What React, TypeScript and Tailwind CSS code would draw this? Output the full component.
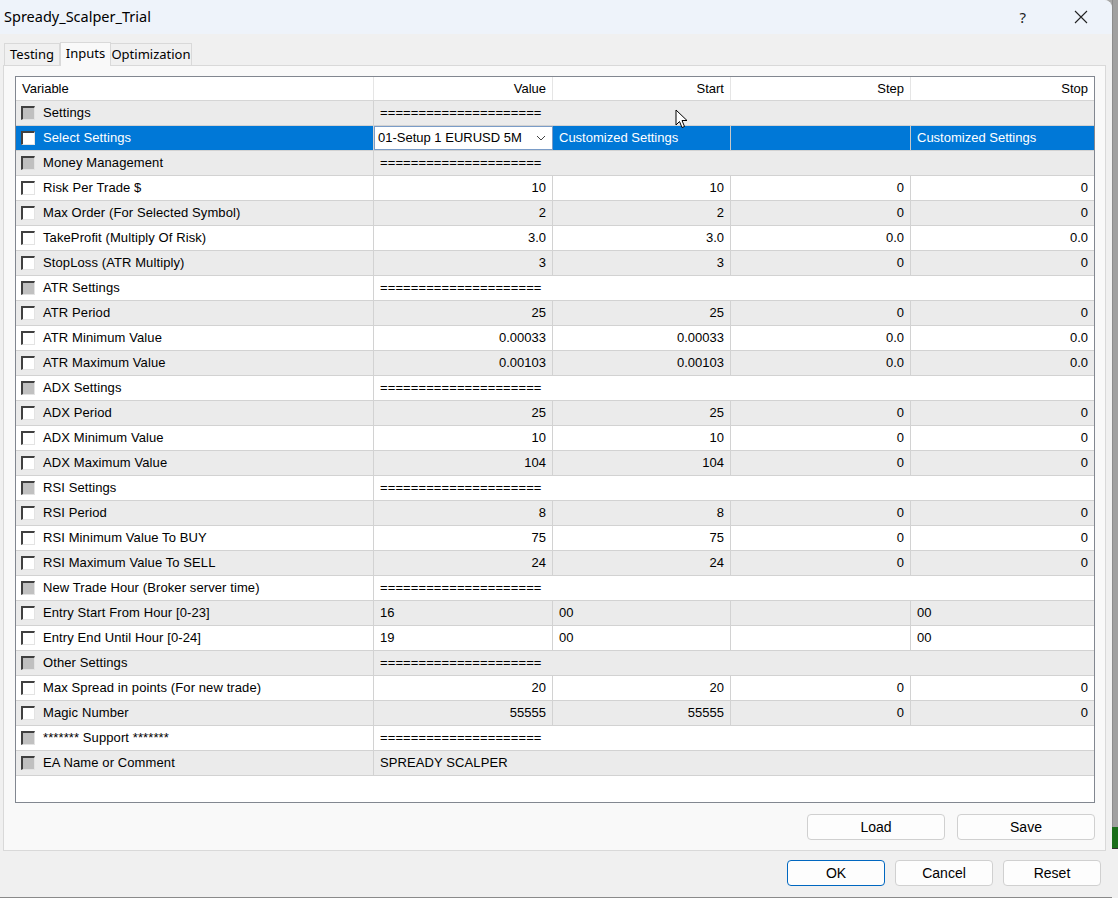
import React from "react";

type Row = {
  name: string;
  group?: boolean;
  text?: string;
  cells?: string[];
  left?: boolean;
  select?: boolean;
};

const EQ = "=====================";

const rows: Row[] = [
  { name: "Settings", group: true, text: EQ },
  { name: "Select Settings", select: true },
  { name: "Money Management", group: true, text: EQ },
  { name: "Risk Per Trade $", cells: ["10", "10", "0", "0"] },
  { name: "Max Order (For Selected Symbol)", cells: ["2", "2", "0", "0"] },
  { name: "TakeProfit (Multiply Of Risk)", cells: ["3.0", "3.0", "0.0", "0.0"] },
  { name: "StopLoss (ATR Multiply)", cells: ["3", "3", "0", "0"] },
  { name: "ATR Settings", group: true, text: EQ },
  { name: "ATR Period", cells: ["25", "25", "0", "0"] },
  { name: "ATR Minimum Value", cells: ["0.00033", "0.00033", "0.0", "0.0"] },
  { name: "ATR Maximum Value", cells: ["0.00103", "0.00103", "0.0", "0.0"] },
  { name: "ADX Settings", group: true, text: EQ },
  { name: "ADX Period", cells: ["25", "25", "0", "0"] },
  { name: "ADX Minimum Value", cells: ["10", "10", "0", "0"] },
  { name: "ADX Maximum Value", cells: ["104", "104", "0", "0"] },
  { name: "RSI Settings", group: true, text: EQ },
  { name: "RSI Period", cells: ["8", "8", "0", "0"] },
  { name: "RSI Minimum Value To BUY", cells: ["75", "75", "0", "0"] },
  { name: "RSI Maximum Value To SELL", cells: ["24", "24", "0", "0"] },
  { name: "New Trade Hour (Broker server time)", group: true, text: EQ },
  { name: "Entry Start From Hour [0-23]", cells: ["16", "00", "", "00"], left: true },
  { name: "Entry End Until Hour [0-24]", cells: ["19", "00", "", "00"], left: true },
  { name: "Other Settings", group: true, text: EQ },
  { name: "Max Spread in points (For new trade)", cells: ["20", "20", "0", "0"] },
  { name: "Magic Number", cells: ["55555", "55555", "0", "0"] },
  { name: "******* Support *******", group: true, text: EQ },
  { name: "EA Name or Comment", group: true, text: "SPREADY SCALPER" },
];

const colW = ["w-[179px]", "w-[178px]", "w-[180px]", "flex-1"];

const Check = ({ gray }: { gray?: boolean }) => (
  <div
    className={`w-[14px] h-[14px] border-t-[2px] border-l-[2px] border-t-[#404040] border-l-[#404040] border-b border-r border-b-[#e3e3e3] border-r-[#e3e3e3] ${gray ? "bg-[#c0c0c0]" : "bg-white"}`}
  />
);

const TableRow = ({ row, idx }: { row: Row; idx: number }) => {
  const sel = row.select;
  const bg = sel ? "bg-[#0078d7] text-white" : idx % 2 === 0 ? "bg-[#ebebeb]" : "bg-white";
  return (
    <div className={`flex h-[25px] border-b border-[#d2d2d2] ${bg}`}>
      <div className="w-[358px] flex items-center gap-[8px] pl-[5px] border-r border-[#d2d2d2]">
        <Check gray={row.group} />
        <span className="tracking-[0.1px]">{row.name}</span>
      </div>
      {row.group && <div className="flex-1 flex items-center pl-[6px] tracking-[0.1px]">{row.text}</div>}
      {sel && (
        <>
          <div className="w-[179px] flex items-center bg-white text-black border border-[#7a9cc7] h-[24px]">
            <span className="pl-[3px] flex-1">01-Setup 1 EURUSD 5M</span>
            <svg width="10" height="6" viewBox="0 0 10 6" className="mr-[6px]">
              <path d="M1 1 L5 5 L9 1" fill="none" stroke="#444" strokeWidth="1" />
            </svg>
          </div>
          <div className="w-[178px] flex items-center pl-[6px] border-r border-[#c8c8c8]">Customized Settings</div>
          <div className="w-[180px] border-r border-[#c8c8c8]" />
          <div className="flex-1 flex items-center pl-[6px]">Customized Settings</div>
        </>
      )}
      {row.cells &&
        row.cells.map((c, i) => (
          <div
            key={i}
            className={`${colW[i]} flex items-center ${row.left ? "justify-start pl-[6px]" : "justify-end pr-[6px]"} ${i < 3 ? "border-r border-[#d2d2d2]" : ""}`}
          >
            {c}
          </div>
        ))}
    </div>
  );
};

const Btn = ({ label, w, primary }: { label: string; w: string; primary?: boolean }) => (
  <button
    className={`${w} h-[26px] rounded-[4px] bg-[#fdfdfd] text-[14px] text-black ${primary ? "border border-[#0067c0]" : "border border-[#d0d0d0]"}`}
  >
    {label}
  </button>
);

export default function App() {
  return (
    <div className="w-[1118px] h-[898px] flex bg-[#a8a8a8] overflow-hidden" style={{ fontFamily: "'Liberation Sans', Arial, sans-serif" }}>
      <div className="w-[1112px] h-[898px] flex flex-col bg-[#f0f0f0] rounded-tr-[8px] overflow-hidden border-b border-[#8a8a8a]">
        <div className="h-[34px] bg-[#eef3fa] flex items-center pl-[4px]" style={{ fontFamily: "'Noto Sans', sans-serif" }}>
          <span className="text-[14.5px] text-black flex-1">Spready_Scalper_Trial</span>
          <span className="text-[15px] text-[#222] mr-[48px]">?</span>
          <svg width="14" height="14" viewBox="0 0 14 14" className="mr-[24px]">
            <path d="M1 1 L13 13 M13 1 L1 13" stroke="#222" strokeWidth="1.1" />
          </svg>
        </div>
        <div className="flex items-end pl-[4px] pt-[8px] h-[31px] text-[13px]" style={{ fontFamily: "'Noto Sans', sans-serif" }}>
          <div className="h-[22px] w-[56px] flex items-center justify-center border border-b-0 border-[#d9d9d9] bg-[#f0f0f0]">Testing</div>
          <div className="h-[24px] w-[51px] flex items-start pt-[1px] justify-center border border-b-0 border-[#d9d9d9] bg-[#f9f9f9] relative top-[1px] z-10">Inputs</div>
          <div className="h-[22px] w-[81px] flex items-center justify-center border border-b-0 border-l-0 border-[#d9d9d9] bg-[#f0f0f0]">Optimization</div>
        </div>
        <div className="ml-[3px] w-[1103px] h-[786px] border border-[#d9d9d9] bg-[#f9f9f9] pl-[11px] pt-[10px] flex flex-col">
          <div className="w-[1080px] h-[727px] border border-[#828790] bg-white text-[13px] text-black flex flex-col">
            <div className="flex h-[24px] border-b border-[#d5d5d5] bg-white">
              <div className="w-[358px] flex items-center pl-[6px] border-r border-[#e5e5e5]">Variable</div>
              {["Value", "Start", "Step", "Stop"].map((h, i) => (
                <div key={h} className={`${colW[i]} flex items-center justify-end pr-[6px] ${i < 3 ? "border-r border-[#e5e5e5]" : ""}`}>
                  {h}
                </div>
              ))}
            </div>
            {rows.map((r, i) => (
              <TableRow key={i} row={r} idx={i} />
            ))}
          </div>
          <div className="flex justify-end gap-[12px] pr-[10px] mt-[11px]">
            <Btn label="Load" w="w-[138px]" />
            <Btn label="Save" w="w-[138px]" />
          </div>
        </div>
        <div className="flex justify-end gap-[10px] pr-[11px] mt-[9px]">
          <Btn label="OK" w="w-[98px]" primary />
          <Btn label="Cancel" w="w-[98px]" />
          <Btn label="Reset" w="w-[98px]" />
        </div>
      </div>
      <div className="flex-1 flex flex-col">
        <div className="h-[827px] bg-[#a0a0a0] border-l border-[#8c8c8c]" />
        <div className="h-[21px] bg-[#1a6e1a]" />
        <div className="flex-1 bg-[#f0f0f0] border-t border-[#333]" />
      </div>
      <svg width="13" height="20" viewBox="0 0 13 20" className="absolute left-[675px] top-[109px]">
        <path d="M1 1 L1 16 L4.5 12.5 L7 18.5 L9.5 17.5 L7 11.5 L12 11.5 Z" fill="#fff" stroke="#000" strokeWidth="1" strokeLinejoin="round" />
      </svg>
    </div>
  );
}
